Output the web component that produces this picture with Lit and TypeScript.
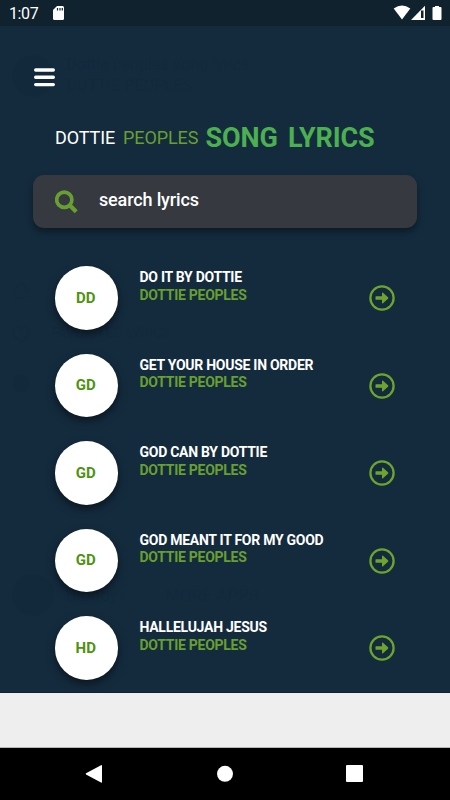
import { LitElement, html, css } from "lit";
import { customElement, property } from "lit/decorators.js";

interface Song { initials: string; title: string; artist: string }

const songs: Song[] = [
  { initials: "DD", title: "DO IT BY DOTTIE", artist: "DOTTIE PEOPLES" },
  { initials: "GD", title: "GET YOUR HOUSE IN ORDER", artist: "DOTTIE PEOPLES" },
  { initials: "GD", title: "GOD CAN BY DOTTIE", artist: "DOTTIE PEOPLES" },
  { initials: "GD", title: "GOD MEANT IT FOR MY GOOD", artist: "DOTTIE PEOPLES" },
  { initials: "HD", title: "HALLELUJAH JESUS", artist: "DOTTIE PEOPLES" },
];

@customElement("status-bar")
class StatusBar extends LitElement {
  static styles = css`
    :host { display: flex; height: 26px; background: #10222d; align-items: flex-start; color: #fff; }
    .time { font: 400 16px/20px Roboto, sans-serif; margin: 4px 0 0 9px; width: 43px; letter-spacing: -0.4px; }
    svg { display: block; }
    .gap { flex: 1; }
  `;
  render() {
    return html`
      <div class="time">1:07</div>
      <svg width="14" height="26" viewBox="0 0 14 26">
        <path d="M5 6h5.500a1.500 1.500 0 0 1 1.500 1.500v11a1.500 1.500 0 0 1-1.500 1.500h-8A1.500 1.500 0 0 1 1 18.500V10z" fill="#fff"/>
        <path d="M5.500 8v2.500M8 8v2.500M10.300 8v2.500" stroke="#10222d" stroke-width="1.200"/>
      </svg>
      <div class="gap"></div>
      <svg width="60" height="26" viewBox="0 0 60 26">
        <path d="M3.700 8.600Q12 2.500 20.300 8.600L12 19.400z" fill="#fff"/>
        <path d="M21 20 35 5.800V20z" fill="#fff"/>
        <path d="M31 10.500h2.500v7.500h-2.500z" fill="#10222d"/>
        <path d="M42.500 8q0-1 1-1H45V6h4v1h1.500q1 0 1 1v11q0 1-1 1h-7q-1 0-1-1z" fill="#fff"/>
      </svg>
    `;
  }
}

@customElement("song-row")
class SongRow extends LitElement {
  @property({ attribute: false }) song!: Song;
  static styles = css`
    :host { display: flex; height: 64px; align-items: flex-start; font-family: Roboto, sans-serif; }
    .avatar { width: 63.500px; height: 63.500px; border-radius: 50%; background: #fff; color: #4e930f; flex: none;
      display: flex; align-items: center; justify-content: center; font-size: 15px; font-weight: 700;
      padding: 0 1px 0 0; box-sizing: border-box;
      box-shadow: 0 4px 8px rgba(0, 0, 0, 0.5); }
    .text { margin: 3px 0 0 21.500px; flex: 1; font-size: 14px; line-height: 17.500px; font-weight: 700; white-space: nowrap; letter-spacing: -0.270px; }
    .title { color: #fff; }
    .artist { color: #689f30; }
    svg { display: block; margin-top: 19.250px; flex: none; }
  `;
  render() {
    return html`
      <div class="avatar">${this.song.initials}</div>
      <div class="text">
        <div class="title">${this.song.title}</div>
        <div class="artist">${this.song.artist}</div>
      </div>
      <svg width="26" height="26" viewBox="0 0 26 26">
        <circle cx="13" cy="13" r="11.600" fill="none" stroke="#6da42d" stroke-width="2.300"/>
        <path d="M7 11.300h6V8.200q0-1.300 1-.4l5 4.500q.7.700 0 1.400l-5 4.500q-1 .9-1-.4v-3.100H7q-.5 0-.5-.5v-2.400q0-.5.500-.5z" fill="#6da42d"/>
      </svg>
    `;
  }
}

@customElement("side-drawer")
class SideDrawer extends LitElement {
  static styles = css`
    :host { position: absolute; inset: 0; overflow: hidden; color: #0e2238; opacity: 0.18; font-family: Roboto, sans-serif; }
    .pic { position: absolute; border-radius: 50%; background: #0e2238; }
    .face { left: 12px; top: 29px; width: 42px; height: 42px; }
    .brand { left: 12px; top: 548px; width: 42px; height: 42px; }
    .name { position: absolute; left: 66px; top: 28px; font-size: 16px; line-height: 21px; }
    .fav { position: absolute; left: 51px; top: 299px; font-size: 14px; }
    .more { position: absolute; left: 66px; top: 559px; font-size: 17px; display: flex; }
    .more span { width: 99px; white-space: nowrap; }
    svg { position: absolute; left: 10px; top: 252px; }
  `;
  render() {
    return html`
      <div class="pic face"></div>
      <div class="name">Dottie peoples song lyrics<br />DOTTIE PEOPLES</div>
      <svg width="22" height="150" viewBox="0 0 22 150" fill="none" stroke="#0e2238" stroke-width="1.500">
        <path d="M2 13 11 5l9 8M5 12v8h12v-8"/>
        <path d="M11 64C-4 53 6 44 11 51c5-7 15 2 0 13z"/>
        <circle cx="11" cy="105" r="8" fill="#0e2238"/>
      </svg>
      <div class="fav">FAVORITED LYRICS</div>
      <div class="pic brand"></div>
      <div class="more"><span>Blodoys</span><span>MORE APPS</span></div>
    `;
  }
}

@customElement("app-root")
class AppRoot extends LitElement {
  static styles = css`
    :host { display: flex; flex-direction: column; width: 450px; height: 800px; overflow: hidden; font-family: Roboto, sans-serif; }
    .screen { position: relative; height: 667px; box-sizing: border-box; background: #142b3e; border-bottom: 1px solid #0a2236; overflow: hidden; }
    .content { position: relative; display: flex; flex-direction: column; }
    .menu { display: block; margin: 42px 0 0 34px; }
    h1 { display: flex; align-items: center; margin: 34px 0 0 55px; height: 34px; line-height: 34px; font-weight: 400; font-size: 18px; white-space: nowrap; }
    .first { color: #fff; width: 68px; letter-spacing: -0.100px; }
    .second { color: #689f30; width: 82.500px; letter-spacing: -0.100px; }
    .third { color: #4caf50; font-size: 27px; font-weight: 700; letter-spacing: -0.100px; word-spacing: 3.500px; }
    .search { margin: 20px 33px 0; height: 52.500px; border-radius: 11px; background: #36393f; display: flex; align-items: center;
      box-shadow: 0 4px 7px rgba(0, 0, 0, 0.4); }
    .search svg { margin: 2px 21px 0 22px; }
    .query { color: #fff; font-size: 18px; font-weight: 500; line-height: 22px; margin-top: -2px; letter-spacing: -0.150px; }
    .list { display: flex; flex-direction: column; gap: 23.500px; margin: 38.500px 55px 0 54.500px; }
    .blank { height: 55px; background: #eee; box-sizing: border-box; border-bottom: 1px solid #b5b5b5; }
    .nav { flex: 1; background: #000; }
    .nav svg { display: block; }
  `;
  render() {
    return html`
      <status-bar></status-bar>
      <div class="screen">
        <side-drawer></side-drawer>
        <div class="content">
          <svg class="menu" width="21" height="19" viewBox="0 0 21 19">
            <path d="M1.700 2h17.600M1.700 9.300h17.600M1.700 16.600h17.600" stroke="#fff" stroke-width="3.400" stroke-linecap="round"/>
          </svg>
          <h1><span class="first">DOTTIE</span><span class="second">PEOPLES</span><span class="third">SONG LYRICS</span></h1>
          <div class="search">
            <svg width="23" height="24" viewBox="0 0 23 24" fill="none" stroke="#689f30">
              <circle cx="9.300" cy="9.800" r="7.600" stroke-width="3.700"/>
              <path d="m14.500 15 6.700 6.700" stroke-width="4.300"/>
            </svg>
            <span class="query">search lyrics</span>
          </div>
          <div class="list">${songs.map((s) => html`<song-row .song=${s}></song-row>`)}</div>
        </div>
      </div>
      <div class="blank"></div>
      <div class="nav">
        <svg width="450" height="52" viewBox="0 0 450 52" fill="#fff">
          <path d="M86 25.300q-.6.600 0 1.200l15 8.100q1 .4 1-.6V17.800q0-1-1-.6z"/>
          <circle cx="225" cy="25.800" r="8"/>
          <rect x="346" y="17" width="17" height="17" rx="1"/>
        </svg>
      </div>
    `;
  }
}
